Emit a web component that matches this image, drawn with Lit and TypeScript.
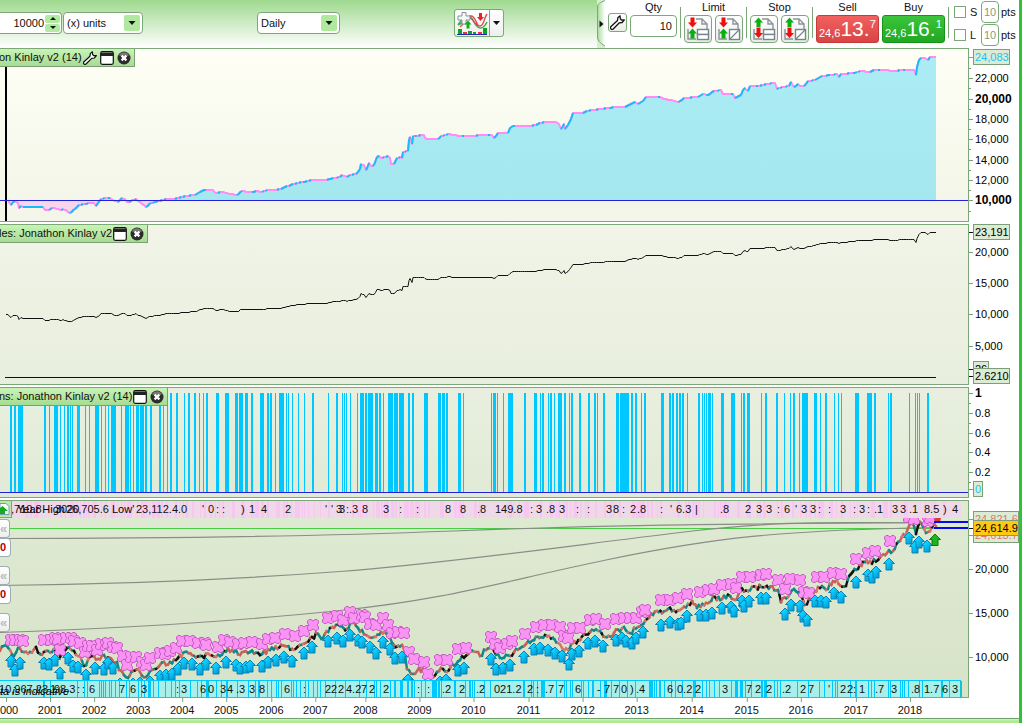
import { LitElement, html, svg, css } from "lit";
import { customElement, property } from "lit/decorators.js";

type Pt = [number, number];

/* Turns "x,y x,y" into number pairs. */
const pts = (s: string): Pt[] =>
  s.trim().split(/\s+/).map((p) => p.split(",").map(Number) as Pt);
const path = (a: Pt[]) => "M" + a.map((p) => p.join(" ")).join("L");

const PLOT_W = 968;
const pct = (x: number) => `${(x / PLOT_W) * 100}%`;

const EQUITY_KEYS = pts(`8,200 11,205 13,202 15,201 18,203 19,208 21,206 23,207 43,207 45,210 49,210 52,208 55,208 60,210 63,209 66,210
70,213 75,209 79,205 83,204 90,203 94,203 96,206 98,203 101,199 106,198 110,198 113,200 118,202 122,198 125,199 127,202 131,201 136,199
140,202 146,207 151,203 158,201 166,199 175,199 185,196 195,195 200,192 204,190 213,190 216,193 222,192 231,194 237,195 242,191 250,192
258,191 262,192 267,190 277,190 285,187 293,184 303,182 313,180 325,180 335,178 340,177 342,175 347,177 350,175 356,174 360,169 361,164
364,165 366,170 369,163 371,166 374,165 377,157 379,156 381,158 384,157 388,156 390,158 391,164 394,164 397,158 400,157 402,158 403,152
408,151 409,140 410,137 412,144 413,136 424,135 425,138 427,139 438,139 441,136 448,134 460,136 492,135 494,138 498,133 508,133 510,128
513,126 530,126 538,124 544,122 556,122 559,124 561,129 564,124 565,129 568,125 571,119 573,113 583,113 587,111 600,109 615,107 625,107
631,104 635,102 638,104 643,101 646,97 660,97 664,99 672,100 677,102 680,101 684,98 698,97 703,94 708,95 714,91 721,90 723,94 733,94
735,98 741,95 743,90 745,88 748,91 750,86 760,86 766,84 775,83 777,89 782,87 789,86 791,82 794,87 798,84 800,86 804,86 808,81 815,80
822,76 830,75 837,74 839,77 841,74 855,73 860,71 870,72 874,70 888,70 890,71 905,70 914,70 916,75 917,67 919,60 921,58 925,58 928,60
930,57 936,57`);

/* Fills in the curve every two units, on whole levels. */
const EQUITY: Pt[] = EQUITY_KEYS.flatMap(([x1, y1], i) => {
  if (i === 0) return [[x1, y1] as Pt];
  const [x0, y0] = EQUITY_KEYS[i - 1];
  const n = Math.max(1, Math.round((x1 - x0) / 2));
  return Array.from({ length: n }, (_, k) => {
    const t = (k + 1) / n;
    return [x0 + (x1 - x0) * t, Math.round(y0 + (y1 - y0) * t)] as Pt;
  });
});

const CLOSED: Pt[] = [[6, 314.5] as Pt].concat(
  EQUITY.map(([x, y]) => [x, Math.round(314 - (200 - y) * 0.575) + 0.5] as Pt));

/* Position bars: x, width. */
const BARS = pts(`10,2 14,2 18,5 44,2 49,1 54,4 60,1 64,1 67,2 70,1 72,1 77,3 85,1 89,1 95,4 101,1 105,1 108,1 111,5 121,1 125,4 130,1
133,1 136,3 140,4 145,2 150,2 159,2 163,1 167,1 170,2 176,2 184,1 188,2 194,2 199,1 203,1 206,2 216,3 225,4 235,3 239,4 245,3 251,2 260,4
267,2 270,2 275,1 279,5 286,1 288,1 292,1 298,1 304,1 312,2 328,1 336,2 342,1 344,1 346,1 350,1 357,1 360,4 365,2 368,5 375,3 379,2 383,1
388,5 394,4 399,5 408,2 412,2 424,4 438,3 442,3 446,2 458,3 463,1 491,1 493,3 497,1 503,1 508,5 524,2 534,3 540,1 542,2 548,1 550,2 554,1
558,4 564,2 569,1 571,2 579,2 588,2 594,2 597,1 603,2 616,3 620,9 631,2 635,2 641,1 644,2 661,3 669,2 672,2 676,2 679,2 682,2 687,1 698,2
702,1 704,1 706,1 708,3 712,1 721,3 731,4 741,1 743,2 747,3 761,1 765,2 776,2 784,1 790,1 793,2 799,1 802,6 814,3 820,1 825,2 834,1 838,1
841,1 855,4 867,5 874,2 888,1 890,2 909,1 915,1 917,1 919,1 927,2`);

const PRICE = pts(`0,651 6,645 10,650 14,656 18,648 24,652 30,652 36,647 40,654 44,652 52,652 57,650 60,657 67,648 74,651 80,656 84,666
88,660 92,656 98,659 104,655 110,658 117,662 119,670 124,675 128,678 133,671 140,672 146,677 152,670 160,665 170,662 178,658 185,652
192,655 200,656 210,655 220,656 224,651 232,650 240,655 250,652 262,654 270,650 285,646 292,649 303,644 312,637 318,634 323,638 330,628
336,625 340,626 347,629 352,623 358,628 366,635 374,637 381,632 388,636 394,645 402,645 405,655 407,669 413,674 419,668 427,674 433,677
439,671 443,669 447,672 452,664 460,660 468,654 476,652 480,656 486,650 490,648 496,655 500,658 506,655 510,656 516,649 526,644 534,640
545,635 553,638 558,643 562,648 568,650 573,643 580,640 590,632 600,631 605,637 614,633 624,627 630,633 638,627 647,619 657,611 662,613
668,609 676,612 680,610 692,601 697,608 706,603 715,597 722,599 730,596 735,600 740,590 748,591 756,587 765,587 778,590 781,602 788,597
794,589 800,592 805,605 811,597 818,587 828,589 833,581 846,586 851,574 858,569 865,562 868,563 878,560 887,553 893,551 900,541 907,531
911,520 914,526 916,534 920,522 926,533 928,532 932,527 936,526`);

const EXITS = pts(`11,640 15,640 20,640 23,641 44,640 51,640 55,638 60,650 58,639 66,638 71,638 74,641 80,643 85,652 88,646 92,646 97,650
101,644 106,645 108,643 113,647 117,648 123,656 127,665 131,657 136,657 142,662 146,665 150,658 160,653 165,654 170,651 176,648 182,641
190,641 198,643 205,643 206,645 218,647 224,640 230,642 238,644 244,643 252,642 262,644 268,639 275,638 285,634 295,636 304,631 313,625
328,618 337,616 343,620 350,612 354,618 362,615 365,617 370,624 376,625 383,618 388,625 392,633 398,632 404,633 409,652 414,659 424,662
428,674 440,660 447,660 458,649 466,648 491,637 495,644 500,648 507,644 512,641 525,634 536,627 544,625 552,625 560,627 564,636 568,638
573,628 580,628 590,620 596,619 605,624 616,619 624,618 630,618 636,618 642,612 645,610 661,600 670,600 678,598 687,594 700,592 708,590
714,589 722,585 731,584 736,588 742,577 750,577 761,575 766,574 778,580 785,589 790,579 800,580 804,592 809,593 817,577 824,577 833,573
841,574 856,559 868,553 875,551 890,541 909,517 914,519 928,521 930,518`);

const ENTRIES = pts(`11,661 15,670 20,663 44,663 49,664 55,660 60,673 68,658 73,666 78,667 86,675 95,668 104,669 108,663 113,668 120,684
133,684 140,683 150,682 160,676 166,675 172,674 178,669 184,663 192,664 200,669 206,664 216,668 226,662 236,665 240,668 246,667 250,666
262,666 268,662 276,660 284,657 292,661 304,653 312,647 328,641 337,638 343,641 350,635 358,640 362,642 370,647 376,653 383,642 390,649
395,658 402,657 408,680 440,682 446,680 458,670 464,668 491,659 496,669 503,668 510,665 524,657 534,649 540,648 548,650 555,653 562,656
569,664 572,654 579,651 588,643 595,641 603,646 616,640 622,638 626,641 632,643 636,638 643,632 661,625 670,622 678,624 681,623 687,616
700,615 706,615 712,613 722,608 731,607 734,611 742,601 744,606 749,601 761,598 766,598 785,614 791,605 800,606 803,616 807,620 815,601
821,601 826,602 834,593 841,597 856,582 868,575 872,577 876,572 889,564 909,538 915,547 919,542 927,546`);

const labels = (s: string): [number, string][] =>
  s.trim().split(/\s+/).map((t) => {
    const i = t.indexOf("@");
    return [Number(t.slice(i + 1)), t.slice(0, i)];
  });

const TOP_LABELS = labels(`,710.8@11 3020@55 26,705.6@66 23,112.4.0@136 '@202 0@208 :@216 :@222 )@241 1@249 4@261 2@285 '@325 '@331 3@336 3@339
:@346 .3@349 8@362 3@383 :@399 :@416 8@445 8@460 .8@477 149.8@495 :@530 3@536 .8@546 3@559 :@576 :@587 3@606 8@613 :@622 2@630 .8@637
:@660 '@670 6.3@676 |@695 .8@720 2@745 3@756 3@766 :@777 6@784 '@795 3@801 3@810 :@818 :@828 3@840 :@853 3@859 :@867 .1@874 3@892 3@900
.1@909 8.5@924 )@943 4@952`);

const BOTTOM_LABELS = labels(`10,967.2@-1 3@42 1@50 98.3@54 :@77 :@82 6@89 7@119 6@130 3@141 :@176 3@181 6@200 0@208 3@220 4@227 .3@236
3@249 8@259 6@284 :@303 2@325 2@331 2@338 4.2@346 7@361 2@369 2@383 :@417 :@427 .2@442 2@459 .2@476 021.2@494 2@527 :@536 .7@545 7@558
6@575 -@597 7@604 7@613 0@621 )@630 .4@636 6@667 0.2@677 2@695 3@722 7@746 2@755 2@766 .2@782 2@800 7@808 '@828 2@840 2@847 :@853 1@859
.7@875 3@891 .8@911 1.7@924 6@942 3@952`);

const STRIPES = pts(`43,2 50,1 77,1 84,1 87,1 99,1 101,1 103,1 105,1 109,1 111,1 115,1 119,1 126,1 129,1 138,1 141,1 144,1 148,3 153,1
158,1 165,1 171,1 175,1 179,1 190,1 197,1 201,1 206,3 216,1 221,1 226,2 237,1 248,1 255,1 258,2 267,1 271,1 276,1 278,1 281,1 291,1 293,1
296,1 300,1 305,1 308,1 313,1 317,1 320,1 325,1 335,1 345,1 359,1 366,1 374,1 376,1 380,1 390,1 394,2 400,3 407,2 411,2 414,1 421,1 425,1
432,5 438,2 441,1 454,2 465,1 469,2 472,1 474,1 484,1 490,1 523,2 531,1 533,1 537,1 541,4 556,1 564,1 566,1 570,1 572,1 581,1 583,1 588,1
592,2 600,1 604,3 611,1 619,1 627,1 635,1 649,4 654,1 656,1 659,2 664,1 671,1 675,1 682,1 693,3 702,1 706,1 709,1 714,1 719,1 731,1 735,3
740,3 745,1 751,1 761,2 764,3 774,1 777,1 780,1 797,1 808,1 819,1 824,1 832,1 835,1 837,1 850,1 855,2 868,1 871,1 874,1 888,1 890,1 900,1
902,1 904,1 908,1 919,1 922,1 941,2 949,1`);

const YEARS: [number, string][] = [
  [6, "2000"], [50, "2001"], [94, "2002"], [138, "2003"], [182, "2004"], [226, "2005"], [271, "2006"],
  [315, "2007"], [365, "2008"], [419, "2009"], [473, "2010"], [528, "2011"], [582, "2012"], [636, "2013"],
  [691, "2014"], [746, "2015"], [800, "2016"], [855, "2017"], [909, "2018"],
];

/* Repeatable noise for the price candles. */
const rand = (() => {
  let s = 7;
  return () => ((s = (s * 16807) % 2147483647) / 2147483647);
})();

const candles = () => {
  const out: { x: number; y: number; x2: number; y2: number; c: string }[] = [];
  const cols = ["#c9605a", "#0c8a8a", "#111111", "#d9746c", "#0c8a8a", "#c9605a"];
  for (let i = 1; i < PRICE.length; i++) {
    const [x0, y0] = PRICE[i - 1], [x1, y1] = PRICE[i];
    const n = Math.max(1, Math.round((x1 - x0) / 2));
    let px = x0, py = y0;
    for (let k = 1; k <= n; k++) {
      const x = x0 + ((x1 - x0) * k) / n;
      const y = y0 + ((y1 - y0) * k) / n + (k < n ? (rand() - 0.5) * 5 : 0);
      out.push({ x: px, y: py, x2: x, y2: y, c: cols[Math.floor(rand() * cols.length)] });
      px = x; py = y;
    }
  }
  return out;
};
const CANDLES = candles();

const wrench = (size: number) => html`<svg width=${size} height=${size} viewBox="0 0 14 14" aria-hidden="true">
  <path d="M9.4 .8 7.3 2.6 7 5.2 1 10.8a1.4 1.4 0 0 0 2 2.2L8.700 7.300 11.300 7 13.400 4.600 10.700 4.700 9.600 3.500Z"
    fill="#fff" stroke="#111" stroke-width="1.2" stroke-linejoin="round"/></svg>`;

const windowIcon = html`<svg width="14" height="14" viewBox="0 0 14 14" aria-hidden="true">
  <rect x=".7" y=".7" width="12.600" height="12.600" rx="1.500" fill="#fff" stroke="#111" stroke-width="1.200"/>
  <path d="M1 1.500h12v3.500H1z" fill="#222"/></svg>`;

const closeIcon = html`<svg width="14" height="14" viewBox="0 0 14 14" aria-hidden="true">
  <circle cx="7" cy="7" r="6.500" fill="#2c2c2c"/><path d="M2 4.500a5.500 5.500 0 0 1 10 0q-5 2-10 0z" fill="#777"/>
  <path d="M4.600 4.600l4.800 4.800M9.400 4.600l-4.800 4.800" stroke="#fff" stroke-width="2.200"/></svg>`;

const arrowUp = "M4.500 0 9 5H6.500v5h-4V5H0z";

/* Order button picture: two price arrows over a ticket. */
const orderIcon = (stop: boolean, diagonal: boolean) => html`<svg width="26" height="26" viewBox="0 0 26 26" aria-hidden="true">
  <path d="M11 3h6l5 5v15M3 13v10h8M17 3v5h5" fill="none" stroke="#8b9499" stroke-width="1.400"/>
  ${diagonal
    ? svg`<rect x="13.500" y="13.500" width="10" height="10" fill="#fff" stroke="#77858c" stroke-width="1.400"/><path d="M14 23 23 14" stroke="#77858c" stroke-width="1.200"/>`
    : svg`<rect x="12.500" y="13.500" width="11" height="5" fill="#fff" stroke="#77858c" stroke-width="1.400"/><rect x="12.500" y="18.500" width="11" height="5" fill="#fff" stroke="#77858c" stroke-width="1.400"/>`}
  ${stop
    ? svg`<path d=${arrowUp} transform="translate(3 1.500)" fill="#0cae12"/><path d=${arrowUp} transform="translate(12 22) rotate(180)" fill="#f00f0f"/>`
    : svg`<path d=${arrowUp} transform="translate(12 11.500) rotate(180)" fill="#f00f0f"/><path d=${arrowUp} transform="translate(3 12.500)" fill="#0cae12"/>`}
</svg>`;

@customElement("panel-title")
class PanelTitle extends LitElement {
  @property() text = "";
  @property({ type: Boolean }) settings = false;
  static styles = css`
    :host { position: absolute; left: 0; top: 0; }
    .tab { display: flex; align-items: center; height: 17px; padding-right: 3px; white-space: nowrap;
      background: linear-gradient(#c9f3b6, #a6dc92); border: solid #7c9f78; border-width: 0 1px 1px 0; }
    .name { margin-left: -1px; font: 11px/17px "Liberation Sans", Arial, sans-serif; color: #111; }
    .tools { display: flex; gap: 3px; padding-left: 1px; }
    button { display: block; width: 14px; height: 14px; padding: 0; border: 0; background: none; }
    svg { display: block; }
  `;
  render() {
    return html`<div class="tab"><span class="name">${this.text}</span>
      <span class="tools">
      ${this.settings ? html`<button aria-label="Settings">${wrench(14)}</button>` : ""}
      <button aria-label="Window">${windowIcon}</button>
      <button aria-label="Close">${closeIcon}</button></span></div>`;
  }
}

interface Tick { y: number; t?: string; b?: boolean; }
interface Tag { y: number; t: string; kind?: string; w?: number; }

@customElement("value-axis")
class ValueAxis extends LitElement {
  @property({ attribute: false }) ticks: Tick[] = [];
  @property({ attribute: false }) tags: Tag[] = [];
  @property({ type: Number }) top = 0;
  @property({ type: Number }) size = 0;
  static styles = css`
    :host { display: block; flex: 0 0 50px; }
    svg { display: block; overflow: visible; font: 11px "Liberation Sans", Arial, sans-serif; }
    .bold { font-weight: 700; font-size: 12px; }
    .mark { stroke: #7c9f78; }
    .box { fill: #dcebd3; stroke: #7c9f78; }
    .cyan { fill: #19c3f5; }
    .red { fill: #e2766e; }
    .gold { fill: #ffc814; }
  `;
  render() {
    return html`<svg width="50" height=${this.size} viewBox="969 ${this.top} 50 ${this.size}">
      ${this.ticks.map((k) => svg`<path class="mark" d="M969 ${k.y + 0.5}h${k.t ? 4 : 2}"/>
        ${k.t ? svg`<text class=${k.b ? "bold" : ""} x="975" y=${k.y + 4}>${k.t}</text>` : ""}`)}
      ${this.tags.map((g) => svg`<path d="M969 ${g.y + 0.5}h4" stroke=${g.kind === "cyan" ? "#19c3f5" : g.kind === "red" ? "#e2766e" : "#111"}/>
        <rect class="box ${g.kind === "gold" ? "gold" : ""}" x="973.500" y=${g.y - 7.5} width=${g.w ?? 36} height="15"/>
        <text class=${g.kind === "gold" ? "" : g.kind ?? ""} x="975" y=${g.y + 4}>${g.t}</text>`)}
    </svg>`;
  }
}

@customElement("trade-strip")
class TradeStrip extends LitElement {
  @property({ type: Boolean }) cyan = false;
  static styles = css`
    :host { position: absolute; left: 0; right: 0; height: 17px; }
    svg { display: block; font: 11px "Liberation Sans", Arial, sans-serif; }
    .italic { font-style: italic; }
  `;
  render() {
    const c = this.cyan;
    return html`<svg width="100%" height="17">
      <rect x=${c ? "0" : pct(11)} y="0" width=${c ? pct(961) : pct(950)} height="17" rx="2" fill=${c ? "#a8efe9" : "#efd9e8"}/>
      ${(c ? STRIPES : BARS).map(([x, w]) => svg`<rect x=${pct(x + (c ? 0 : 16))} y="0" width=${w} height="17" shape-rendering="crispEdges"
        fill=${c ? "#00c8ff" : "#f7c6f1"}/>`)}
      ${c ? svg`<rect x="0" y="0" width=${pct(961)} height="1" fill="#00c8ff"/><rect x=${pct(960)} y="1" width="2" height="16" fill="#18c3d0"/>` : ""}
      ${(c ? BOTTOM_LABELS : TOP_LABELS).map(([x, t]) => svg`<text x=${pct(x)} y=${c ? 13 : 12} fill="#111">${t}</text>`)}
      ${c ? svg`<text class="italic" x="0" y="15">ta is indicative</text>`
          : svg`<text x=${pct(17)} y="12">Year High</text><text x=${pct(112)} y="12">Low'</text>`}
    </svg>`;
  }
}

@customElement("app-root")
class AppRoot extends LitElement {
  static styles = css`
    :host { display: block; border-right: 3px solid #2fc436; background: #fff; color: #111;
      font: 11px/15px "Liberation Sans", Arial, sans-serif; overflow: hidden; }
    * { box-sizing: border-box; }
    input, select, button { font: inherit; color: inherit; margin: 0; }
    svg { display: block; }

    .bar { display: flex; height: 48px; background: linear-gradient(#9fd98f, #fff); }
    .controls { display: flex; flex: 1; gap: 114px; padding-top: 12px; align-items: flex-start; }
    .sizing { display: flex; gap: 1px; }
    .amount { display: flex; width: 62px; height: 22px; background: #fff; border: 1px solid #7aa876; border-left: 0; border-radius: 0 4px 4px 0; }
    .amount input { width: 44px; border: 0; padding: 0; text-align: right; background: none; appearance: textfield; }
    .amount input::-webkit-inner-spin-button { display: none; }
    .spin { display: flex; flex-direction: column; justify-content: center; gap: 1px; width: 15px; margin-left: 1px; }
    .spin button { height: 8px; padding: 0; border: 0; border-radius: 2px; background: #b2eaa2; display: grid; place-items: center; }
    .drop { position: relative; display: block; }
    .drop select { appearance: none; height: 22px; padding: 0 22px 0 3px; border: 1px solid #7aa876; border-radius: 4px; background: #fff; }
    .drop svg { position: absolute; right: 3px; top: 3px; pointer-events: none; }
    .units select { width: 80px; }
    .period select { width: 83px; }
    .indicator { display: flex; margin-top: -3px; height: 28px; border: 1px solid #7aa876; border-radius: 3px; background: linear-gradient(#fff, #eee); overflow: hidden; }
    .indicator button { padding: 0; border: 0; background: none; display: grid; place-items: center; }
    .indicator .add { width: 34px; }
    .indicator .more { width: 14px; border-left: 1px solid #7aa876; }

    .trade { display: flex; align-items: flex-start; gap: 3px; background: #fff; height: 48px; }
    .handle { width: 8px; height: 48px; padding: 0; border: 0; background: none; }
    .tool { width: 19px; height: 19px; margin-top: 13px; padding: 0; display: grid; place-items: center; border: 1px solid #7aa876; border-radius: 3px; background: linear-gradient(#fff, #e8eee6); }
    .group { text-align: center; }
    .group > label, .group > span { display: block; }
    .pair { display: flex; gap: 3px; }
    .qty { display: block; width: 47px; height: 22px; padding: 0 4px; text-align: right; border: 1px solid #7aa876; border-radius: 4px; background: #fff; }
    .order { width: 28px; height: 28px; padding: 0; display: grid; place-items: center; border: 1px solid #7aa876; border-radius: 4px; background: linear-gradient(#fff, #e9ebe9); }
    .sep { width: 1px; height: 31px; margin-top: 7px; background: #7aa876; }
    .deal { display: flex; width: 63px; height: 28px; padding: 0 2px; align-items: flex-start; border-radius: 3px; color: #fff; }
    .sell { background: linear-gradient(#f0615f, #d94444); border: 1px solid #c53a3a; }
    .buy { background: linear-gradient(#3cc43c, #20a820); border: 1px solid #179317; }
    .small { line-height: 12px; margin-top: 11px; }
    .big { font-size: 21px; line-height: 26px; }
    .sup { line-height: 12px; margin-top: 2px; }
    .risk { display: grid; gap: 1px; padding: 1px 3px 0 2px; }
    .row { display: grid; grid-template-columns: 12px 11px 18px 15px; gap: 2px; align-items: center; }
    .row input[type="checkbox"] { appearance: none; width: 12px; height: 12px; border: 1px solid #7aa876; background: #fff; }
    .row label { padding-left: 2px; }
    .pts { width: 18px; height: 22px; padding: 0; text-align: center; color: #8a9a7c; border: 1px solid #7aa876; border-radius: 4px; background: #fff; }

    .panels { display: grid; gap: 2px; }
    .panel { display: flex; align-items: flex-start; }
    .plot { position: relative; flex: 1; min-width: 0; border: 1px solid #7aa876; border-left: 0; overflow: hidden; }
    .p1 { background: linear-gradient(#fffff5, #f2f5e8); }
    .p2 { background: linear-gradient(#f1f4e7, #e8eedd); }
    .p3 { background: linear-gradient(#e8efdf, #e1ead6); }
    .p4 { background: linear-gradient(#dfead3, #d7e3c8); }
    .top { top: 0; }
    .bottom { bottom: 0; }
    .upload { position: absolute; left: 0; top: 0; width: 12px; height: 17px; padding: 0; background: #b9e8a6; border: solid #7aa876; border-width: 0 1px 1px 0; }
    .flags { position: absolute; left: 0; top: 18px; display: grid; gap: 9px; }
    .flag { width: 11px; }
    .flag button, .flag span { display: block; height: 19px; border: 1px solid #9cadb5; border-left: 0; border-radius: 0 4px 4px 0; background: linear-gradient(#fff, #eceeee); }
    .flag button { width: 10px; padding: 0; color: #bbb; font-weight: 700; line-height: 15px; text-align: left; font-size: 13px; }
    .flag span { color: #b00010; font-weight: 700; line-height: 17px; background: #fff; }
    .years { margin-right: 50px; height: 20px; }
    .years svg { overflow: hidden; }
    .foot { height: 5px; border-top: 1px solid #6fa06b; background: linear-gradient(#d5f6c6, #aeeb92 2px); }
  `;

  private equity() {
    const area = path([...EQUITY, [936, 200], [8, 200]]) + "z";
    const segs = EQUITY.slice(1).map((p, i) => ({ a: EQUITY[i], b: p }));
    const gains = segs.filter(({ a, b }, i) => b[1] < a[1] || (b[0] > 23 && b[0] <= 43) || (b[1] === a[1] && i % 13 === 4));
    return html`<svg width="100%" height="172" viewBox="0 49 968 172" preserveAspectRatio="none">
      <defs><clipPath id="above"><path d="M0 0h968v200H0z"/></clipPath><clipPath id="below"><path d="M0 200h968v30H0z"/></clipPath></defs>
      <path d=${area} fill="#19cdf8" fill-opacity=".36" clip-path="url(#above)"/>
      <path d=${area} fill="#ff9df5" fill-opacity=".36" clip-path="url(#below)"/>
      <path d="M6 66v155" stroke="#000" stroke-width="2"/>
      <path d=${path(EQUITY)} fill="none" stroke="#ff8df5" stroke-width="2" stroke-linejoin="round"/>
      ${gains.map((s) => svg`<path d=${path([s.a, s.b])} stroke="#12bdfa" stroke-width="2"/>`)}
      <path d="M0 200.500h968" stroke="#2222d8"/>
    </svg>`;
  }

  private price() {
    return html`<svg width="100%" height="196" viewBox="0 501 968 196" preserveAspectRatio="none">
      <defs>
        <linearGradient id="ag" x2="1" y2="1"><stop offset=".35" stop-color="#0bd0ff"/><stop offset="1" stop-color="#0682bb"/></linearGradient>
        <g id="x"><path d="M-5.500-4-4-5.500H-2L0-4 2-5.500H4L5.500-4V-2L4 0 5.500 2V4L4 5.500H2L0 4-2 5.500H-4L-5.500 4V2L-4 0-5.500-2z" fill="#fb93f5" stroke="#c85cc6" stroke-width="1"/></g>
        <g id="up"><path d="M0-6 5.500-.500H3V6H-3V-.500H-5.500z" fill="url(#ag)" stroke="#0784bb" stroke-width="1"/></g>
      </defs>
      <path d="M10 528.500H936" stroke="#45cf45"/>
      <g fill="none" stroke="#8a8d86" stroke-width="1.200">
        <path d="M0 538.500C150 538.500 300 537 453 531S700 524 936 522.500"/>
        <path d="M0 585.500C130 584 240 579 340 571.500S560 547 680 532.500 850 524 936 522.500"/>
        <path d="M0 632.500C130 628 230 622 340 610.500S500 582 606 560 780 530 936 527.500"/>
      </g>
      <g stroke-width="2.400" stroke-linecap="square">
        ${CANDLES.map((k) => svg`<path d="M${k.x} ${k.y}L${k.x2} ${k.y2}" stroke=${k.c}/>`)}
      </g>
      ${EXITS.map(([x, y]) => svg`<use href="#x" x=${x} y=${y}/>`)}
      ${ENTRIES.map(([x, y]) => svg`<use href="#up" x=${x} y=${y}/>`)}
      <path d="M935 534l5.500 5.500H938v6h-6v-6h-2.500z" fill="#1db51d" stroke="#0a7a0a"/>
      <path d="M934 519l3-2 4 1-1 4h-5z" fill="#d93a3a"/>
      <path d="M934 522h34M934 528h34" stroke="#0808f0" stroke-width="2"/>
    </svg>`;
  }

  private down(s = 16) {
    return html`<svg width=${s} height=${s} viewBox="0 0 16 16" aria-hidden="true"><rect width="16" height="16" rx="2" fill="#b0e89f"/><path d="M4.500 6h7L8 10z" fill="#111"/></svg>`;
  }

  private toolbar() {
    return html`<header class="bar">
      <div class="controls">
        <div class="sizing">
          <div class="amount"><input type="number" value="10000" aria-label="Amount">
            <span class="spin">
              <button aria-label="Increase"><svg width="6" height="3"><path d="M0 3 3 0 6 3z" fill="#111"/></svg></button>
              <button aria-label="Decrease"><svg width="6" height="3"><path d="M0 0h6L3 3z" fill="#111"/></svg></button>
            </span></div>
          <label class="drop units"><select aria-label="Units"><option>(x) units</option></select>${this.down()}</label>
        </div>
        <label class="drop period"><select aria-label="Period"><option>Daily</option></select>${this.down()}</label>
        <div class="indicator">
          <button class="add" aria-label="Add indicator"><svg width="32" height="26" viewBox="0 0 32 26">
            <path d="M2 15C8 5 14 4 18 12s9 8 13 0M2 15c6-2 8-7 13-9" fill="none" stroke="#38b548" stroke-width="1.600"/>
            <path d="M4 17C9 14 10 6 15 6s5 10 9 10 4-8 7-12M14 7c4 3 5 9 10 9" fill="none" stroke="#d94b56" stroke-width="1.400"/>
            <path d="M6 2.500h4V6h4v4h-4v4H6v-4H2V6h4z" fill="#f6f8f8" stroke="#83949c"/>
            <path d="M12 10.500l3.500 4h-2v4h-3v-4h-2z" fill="#0fae1a"/><path d="M24.500 11l-3.500-4h2V3h3v4h2z" fill="#ef2020"/>
            <path d="M2 19h4v5H2zM12 21h4v3h-4zM17 22h3v2h-3zM27 18h4v6h-4z" fill="#0fa31a"/><path d="M7 22h4v2H7zM22 22h4v2h-4z" fill="#e33"/>
            <path d="M1 24.500h30" stroke="#2424c8"/></svg></button>
          <button class="more" aria-label="More"><svg width="7" height="4"><path d="M0 0h7L3.500 4z" fill="#111"/></svg></button>
        </div>
      </div>
      <section class="trade" aria-label="Trading">
        <button class="handle" aria-label="Collapse"><svg width="8" height="48" viewBox="0 0 8 48">
          <defs><linearGradient id="hg"><stop stop-color="#a9dc9b"/><stop offset="1" stop-color="#fff"/></linearGradient></defs>
          <path d="M0 0h8Q1 3 .5 6V38q.5 4 7.500 8v2H0z" fill="#d6efce"/>
          <path d="M8 .5Q1 3 .5 6V38q.5 4 7.500 8" fill="url(#hg)" stroke="#7aa876"/>
          <path d="M2.500 20.500v7l4-3.500z" fill="#111"/></svg></button>
        <button class="tool" aria-label="Trading settings">${wrench(15)}</button>
        <div class="group"><label for="qty">Qty</label><input id="qty" class="qty" value="10"></div>
        <i class="sep"></i>
        <div class="group"><span>Limit</span><div class="pair">
          <button class="order" aria-label="Limit order">${orderIcon(false, false)}</button>
          <button class="order" aria-label="Limit order, free">${orderIcon(false, true)}</button></div></div>
        <i class="sep"></i>
        <div class="group"><span>Stop</span><div class="pair">
          <button class="order" aria-label="Stop order">${orderIcon(true, false)}</button>
          <button class="order" aria-label="Stop order, free">${orderIcon(true, true)}</button></div></div>
        <i class="sep"></i>
        <div class="group"><span>Sell</span>
          <button class="deal sell"><span class="small">24,6</span><span class="big">13.</span><span class="sup">7</span></button></div>
        <div class="group"><span>Buy</span>
          <button class="deal buy"><span class="small">24,6</span><span class="big">16.</span><span class="sup">1</span></button></div>
        <i class="sep"></i>
        <div class="risk">
          <div class="row"><input type="checkbox" id="s"><label for="s">S</label><input class="pts" value="10" aria-label="Stop points"><span>pts</span></div>
          <div class="row"><input type="checkbox" id="l"><label for="l">L</label><input class="pts" value="10" aria-label="Limit points"><span>pts</span></div>
        </div>
      </section>
    </header>`;
  }

  render() {
    const minor = (...ys: number[]): Tick[] => ys.map((y) => ({ y }));
    return html`${this.toolbar()}
      <main class="panels">
        <section class="panel">
          <div class="plot p1">${this.equity()}<panel-title text="on Kinlay v2 (14)" settings></panel-title></div>
          <value-axis .top=${48} .size=${174}
            .ticks=${[{ y: 78, t: "22,000" }, { y: 99, t: "20,000", b: true }, { y: 119, t: "18,000" }, { y: 139, t: "16,000" },
              { y: 160, t: "14,000" }, { y: 180, t: "12,000" }, { y: 200, t: "10,000", b: true },
              ...minor(68, 88, 109, 129, 149, 170, 190, 211)]}
            .tags=${[{ y: 57, t: "24,083", kind: "cyan" }]}></value-axis>
        </section>
        <section class="panel">
          <div class="plot p2"><svg width="100%" height="159" viewBox="0 225 968 159" preserveAspectRatio="none">
            <path d=${path(CLOSED)} fill="none" stroke="#111"/><path d="M5 377.500H936" stroke="#111"/></svg>
            <panel-title text="les: Jonathon Kinlay v2"></panel-title></div>
          <value-axis .top=${224} .size=${161}
            .ticks=${[{ y: 252, t: "20,000" }, { y: 283, t: "15,000" }, { y: 314, t: "10,000" }, { y: 346, t: "5,000" }]}
            .tags=${[{ y: 232, t: "23,191" }, { y: 369, t: "26", w: 15 }, { y: 376, t: "2.6210" }]}></value-axis>
        </section>
        <section class="panel">
          <div class="plot p3"><svg width="100%" height="109" viewBox="0 388 968 109" preserveAspectRatio="none">
            ${BARS.map(([x, w]) => svg`<rect x=${x} y="393" width=${w} height="99" fill="#00c8ff" shape-rendering="crispEdges"/>`)}
            <path d="M0 492.500h968" stroke="#2222d8"/></svg>
            <panel-title text="ns: Jonathon Kinlay v2 (14)"></panel-title></div>
          <value-axis .top=${387} .size=${111}
            .ticks=${[{ y: 393, t: "1", b: true }, { y: 413, t: "0.8" }, { y: 433, t: "0.6" }, { y: 452, t: "0.4" }, { y: 472, t: "0.2" },
              ...minor(403, 423, 443, 462, 482)]}
            .tags=${[{ y: 489, t: "0", kind: "cyan", w: 9 }]}></value-axis>
        </section>
        <section class="panel">
          <div class="plot p4">${this.price()}
            <trade-strip class="top"></trade-strip>
            <trade-strip class="bottom" cyan></trade-strip>
            <button class="upload" aria-label="Load"><svg width="10" height="14" viewBox="0 0 10 14">
              <path d="M0 1.500h6l3 3v8H0z" fill="#fff" stroke="#7f97b0"/><path d="M-3 9l5.500-5L8 9H5v3H0V9z" fill="#12ac1c"/></svg></button>
            <div class="flags">
              <div class="flag"><button aria-label="Fold">«</button><span>0</span></div>
              <div class="flag"><button aria-label="Fold">«</button><span>0</span></div>
              <div class="flag"><button aria-label="Fold">«</button></div>
            </div>
          </div>
          <value-axis .top=${500} .size=${198}
            .ticks=${[{ y: 569, t: "20,000" }, { y: 613, t: "15,000" }, { y: 657, t: "10,000" }]}
            .tags=${[{ y: 519, t: "24,821.6", kind: "red", w: 45 }, { y: 535, t: "24,613.7", kind: "red", w: 45 }, { y: 528, t: "24,614.9", kind: "gold", w: 45 }]}></value-axis>
        </section>
      </main>
      <div class="years"><svg width="100%" height="20">
        ${YEARS.map(([x, t]) => svg`<rect x=${pct(x)} y="0" width="1" height="4" fill="#7aa876"/>
          <text x=${pct(x)} y="16" text-anchor="middle" fill="#111">${t}</text>`)}</svg></div>
      <div class="foot"></div>`;
  }
}
